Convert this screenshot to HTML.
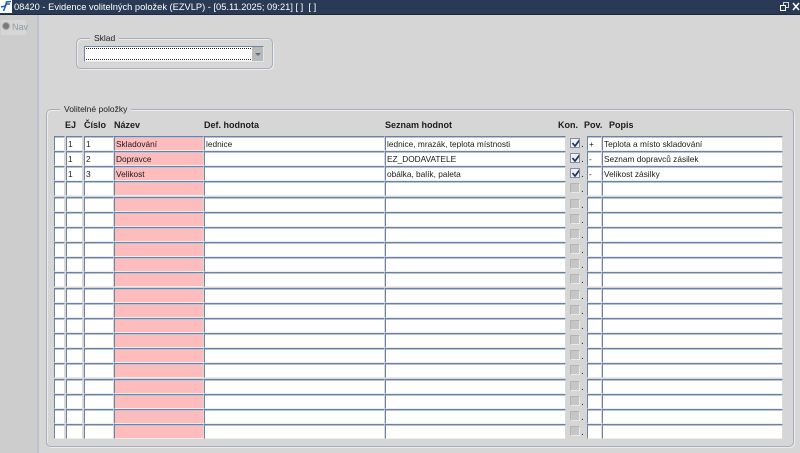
<!DOCTYPE html>
<html lang="cs">
<head>
<meta charset="utf-8">
<title>Evidence volitelných položek</title>
<style>
html,body{margin:0;padding:0;width:800px;height:453px;overflow:hidden;background:#d6d6d6;font-family:"Liberation Sans",Arial,sans-serif;color:#111}
*{box-sizing:border-box}
#wrap{position:absolute;left:0;top:0;width:800px;height:453px;background:#d6d6d6;filter:blur(.3px)}
.a{position:absolute}
#title{left:0;top:0;width:800px;height:15px;background:#2a3a54;border-bottom:1px solid #1d2a40}
#titletext{left:14px;top:0;height:14px;line-height:14px;color:#fff;font-size:9.3px;white-space:pre}
#logo{left:0;top:0;width:12px;height:13px;background:#fff}
#side{left:0;top:15px;width:39px;height:438px;background:#cdcdcd;border-right:2px solid #bcc3cf}
#nav{left:1px;top:20px;width:25px;height:15px;background:#d6d6d6;color:#8c98aa;font-size:9px;line-height:15px;padding-left:11px}
#dot{left:2px;top:22px;width:8px;height:8px;border-radius:50%;background:#7a7a7a;border:1px solid #aaa}
.fs{border:1px solid #a4aebc;border-radius:5px;box-shadow:inset 1px 1px 0 #ececec,1px 1px 0 #ececec}
.leg{background:#d6d6d6;font-size:8.5px;line-height:12px;padding:0 4px;color:#222}
#combo{left:84px;top:46px;width:180px;height:16px;background:#fff;border:1px solid #6f86a8;border-right-color:#dfe4ea;border-bottom-color:#e6e6e6}
#combo i{position:absolute;left:1px;right:12px;top:1px;bottom:1px;border:1px dotted #222;border-left:0;border-right:0}
#btn{right:0;top:0;width:11px;height:14px;background:#b9b9b9}
#btn b{position:absolute;left:3px;top:6px;border:3px solid transparent;border-top:3px solid #5c6f8c;border-bottom:0}
.h{top:119px;font-size:9px;font-weight:bold;line-height:12px;color:#1c1c1c;white-space:pre}
.r{position:absolute;left:0;width:800px;height:15px}
.r div{position:absolute;top:0;height:15px;background:#fff;border-top:1px solid #6a82a6;border-left:1px solid #6a82a6;border-right:1px solid #d9d9d9;border-bottom:1px solid #ececec;font-size:8.3px;line-height:14px;padding-left:1px;color:#1a1a1a;white-space:nowrap;overflow:hidden;box-shadow:inset 0 1px 0 #b8c3d3}
.r .c1{left:54px;width:11px}
.r .c2{left:66px;width:17px}
.r .c3{left:84px;width:30px}
.r .c4{left:114px;width:90px;background:#ffbcbc}
.r .c5{left:204px;width:181px}
.r .c6{left:385px;width:181px}
.r .c7{left:570px;top:2px;width:10px;height:10px;background:#c6c6c6;border:1px solid #b4b4b4;border-right-color:#e9e9e9;border-bottom-color:#e9e9e9;box-shadow:none;padding:0}
.r .c7.on{background:#eef1f6;border-color:#7d8ea8}
.r .c7 svg{position:absolute;left:0;top:0}
.r span{position:absolute;left:581px;top:4px;font-size:10px;line-height:10px;color:#222}
.r .c8{left:587px;width:15px}
.r .c9{left:602px;width:181px}
</style>
</head>
<body>
<div id="wrap">
<div class="a" id="title"></div>
<div class="a" id="logo"><svg width="12" height="13" viewBox="0 0 12 13"><path d="M1 7 L5.500 6 L3.500 11 M5.500 6 L6.500 2 L11 1.500 M6 4 L10 4" stroke="#1f5fc4" stroke-width="1.600" fill="none"/></svg></div>
<div class="a" id="titletext">08420 - Evidence volitelných položek (EZVLP) - [05.11.2025; 09:21] [ ]  [ ]</div>
<svg class="a" style="left:780px;top:2px" width="20" height="10" viewBox="0 0 20 10"><rect x="3.500" y="0.500" width="5" height="5" fill="none" stroke="#cfd5de"/><rect x="0.500" y="3.500" width="5" height="5" fill="#2a3a54" stroke="#fff"/><path d="M13 1 L19 8 M19 1 L13 8" stroke="#fff" stroke-width="1.500"/></svg>

<div class="a" id="side"></div>
<div class="a" id="nav">Nav</div>
<div class="a" id="dot"></div>

<div class="a fs" style="left:76px;top:38px;width:197px;height:31px"></div>
<div class="a leg" style="left:90px;top:32px">Sklad</div>
<div class="a" id="combo"><i></i><div class="a" id="btn"><b></b></div></div>

<div class="a fs" style="left:46px;top:109px;width:748px;height:338px"></div>
<div class="a leg" style="left:60px;top:103px">Volitelné položky</div>

<div class="a h" style="left:65px">EJ</div>
<div class="a h" style="left:84px">Číslo</div>
<div class="a h" style="left:114px">Název</div>
<div class="a h" style="left:204px">Def. hodnota</div>
<div class="a h" style="left:385px">Seznam hodnot</div>
<div class="a h" style="left:558px">Kon.</div>
<div class="a h" style="left:584px">Pov.</div>
<div class="a h" style="left:609px">Popis</div>

<div class="r" style="top:136px"><div class="c1"></div><div class="c2">1</div><div class="c3">1</div><div class="c4">Skladování</div><div class="c5">lednice</div><div class="c6">lednice, mrazák, teplota místnosti</div><div class="c7 on"><svg width="10" height="10" viewBox="0 0 10 10"><path d="M1.500 4 L4 7 L9 0.500" stroke="#24324a" stroke-width="1.700" fill="none"/></svg></div><span>.</span><div class="c8">+</div><div class="c9">Teplota a místo skladování</div></div>
<div class="r" style="top:151px"><div class="c1"></div><div class="c2">1</div><div class="c3">2</div><div class="c4">Dopravce</div><div class="c5"></div><div class="c6">EZ_DODAVATELE</div><div class="c7 on"><svg width="10" height="10" viewBox="0 0 10 10"><path d="M1.500 4 L4 7 L9 0.500" stroke="#24324a" stroke-width="1.700" fill="none"/></svg></div><span>.</span><div class="c8">-</div><div class="c9">Seznam dopravců zásilek</div></div>
<div class="r" style="top:166px"><div class="c1"></div><div class="c2">1</div><div class="c3">3</div><div class="c4">Velikost</div><div class="c5"></div><div class="c6">obálka, balík, paleta</div><div class="c7 on"><svg width="10" height="10" viewBox="0 0 10 10"><path d="M1.500 4 L4 7 L9 0.500" stroke="#24324a" stroke-width="1.700" fill="none"/></svg></div><span>.</span><div class="c8">-</div><div class="c9">Velikost zásilky</div></div>
<div class="r" style="top:181px"><div class="c1"></div><div class="c2"></div><div class="c3"></div><div class="c4"></div><div class="c5"></div><div class="c6"></div><div class="c7"></div><span>.</span><div class="c8"></div><div class="c9"></div></div>
<div class="r" style="top:197px"><div class="c1"></div><div class="c2"></div><div class="c3"></div><div class="c4"></div><div class="c5"></div><div class="c6"></div><div class="c7"></div><span>.</span><div class="c8"></div><div class="c9"></div></div>
<div class="r" style="top:212px"><div class="c1"></div><div class="c2"></div><div class="c3"></div><div class="c4"></div><div class="c5"></div><div class="c6"></div><div class="c7"></div><span>.</span><div class="c8"></div><div class="c9"></div></div>
<div class="r" style="top:227px"><div class="c1"></div><div class="c2"></div><div class="c3"></div><div class="c4"></div><div class="c5"></div><div class="c6"></div><div class="c7"></div><span>.</span><div class="c8"></div><div class="c9"></div></div>
<div class="r" style="top:242px"><div class="c1"></div><div class="c2"></div><div class="c3"></div><div class="c4"></div><div class="c5"></div><div class="c6"></div><div class="c7"></div><span>.</span><div class="c8"></div><div class="c9"></div></div>
<div class="r" style="top:257px"><div class="c1"></div><div class="c2"></div><div class="c3"></div><div class="c4"></div><div class="c5"></div><div class="c6"></div><div class="c7"></div><span>.</span><div class="c8"></div><div class="c9"></div></div>
<div class="r" style="top:272px"><div class="c1"></div><div class="c2"></div><div class="c3"></div><div class="c4"></div><div class="c5"></div><div class="c6"></div><div class="c7"></div><span>.</span><div class="c8"></div><div class="c9"></div></div>
<div class="r" style="top:288px"><div class="c1"></div><div class="c2"></div><div class="c3"></div><div class="c4"></div><div class="c5"></div><div class="c6"></div><div class="c7"></div><span>.</span><div class="c8"></div><div class="c9"></div></div>
<div class="r" style="top:303px"><div class="c1"></div><div class="c2"></div><div class="c3"></div><div class="c4"></div><div class="c5"></div><div class="c6"></div><div class="c7"></div><span>.</span><div class="c8"></div><div class="c9"></div></div>
<div class="r" style="top:318px"><div class="c1"></div><div class="c2"></div><div class="c3"></div><div class="c4"></div><div class="c5"></div><div class="c6"></div><div class="c7"></div><span>.</span><div class="c8"></div><div class="c9"></div></div>
<div class="r" style="top:333px"><div class="c1"></div><div class="c2"></div><div class="c3"></div><div class="c4"></div><div class="c5"></div><div class="c6"></div><div class="c7"></div><span>.</span><div class="c8"></div><div class="c9"></div></div>
<div class="r" style="top:348px"><div class="c1"></div><div class="c2"></div><div class="c3"></div><div class="c4"></div><div class="c5"></div><div class="c6"></div><div class="c7"></div><span>.</span><div class="c8"></div><div class="c9"></div></div>
<div class="r" style="top:363px"><div class="c1"></div><div class="c2"></div><div class="c3"></div><div class="c4"></div><div class="c5"></div><div class="c6"></div><div class="c7"></div><span>.</span><div class="c8"></div><div class="c9"></div></div>
<div class="r" style="top:379px"><div class="c1"></div><div class="c2"></div><div class="c3"></div><div class="c4"></div><div class="c5"></div><div class="c6"></div><div class="c7"></div><span>.</span><div class="c8"></div><div class="c9"></div></div>
<div class="r" style="top:394px"><div class="c1"></div><div class="c2"></div><div class="c3"></div><div class="c4"></div><div class="c5"></div><div class="c6"></div><div class="c7"></div><span>.</span><div class="c8"></div><div class="c9"></div></div>
<div class="r" style="top:409px"><div class="c1"></div><div class="c2"></div><div class="c3"></div><div class="c4"></div><div class="c5"></div><div class="c6"></div><div class="c7"></div><span>.</span><div class="c8"></div><div class="c9"></div></div>
<div class="r" style="top:424px"><div class="c1"></div><div class="c2"></div><div class="c3"></div><div class="c4"></div><div class="c5"></div><div class="c6"></div><div class="c7"></div><span>.</span><div class="c8"></div><div class="c9"></div></div>
</div>
</body>
</html>
